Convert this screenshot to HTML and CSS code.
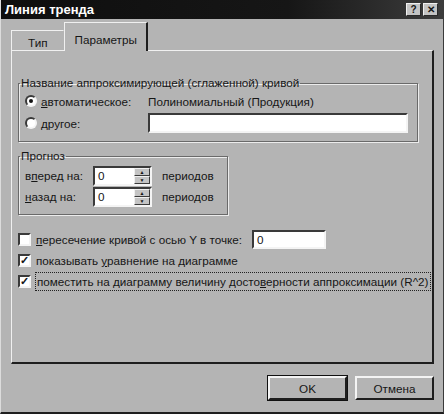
FILE: index.html
```html
<!DOCTYPE html>
<html lang="ru">
<head>
	<meta charset="UTF-8">
	<title>Линия тренда</title>
	<link rel="stylesheet" href="styles.css">
</head>
<body>

	<div class="dialog">
		<!-- title bar -->
		<div class="titlebar">
			<span class="title">Линия тренда</span>
			<div class="caption-buttons">
				<span class="cap-btn">?</span>
				<span class="cap-btn">&#x2715;</span>
			</div>
		</div>

		<!-- tabs -->
		<div class="tabs">
			<div class="tab">Тип</div>
			<div class="tab active-tab">Параметры</div>
		</div>

		<div class="panel">
			<fieldset class="group group-name">
				<legend>Название аппроксимирующей (сглаженной) кривой</legend>
				<div class="row">
					<span class="radio checked"></span>
					<span class="radio-label"><u>а</u>втоматическое:</span>
					<span>Полиномиальный (Продукция)</span>
				</div>
				<div class="row">
					<span class="radio"></span>
					<span class="radio-label"><u>д</u>ругое:</span>
					<span class="textbox name-box"></span>
				</div>
			</fieldset>

			<fieldset class="group group-forecast">
				<legend>Прогноз</legend>
				<div class="row">
					<span class="field-label">в<u>п</u>еред на:</span>
					<div class="spinner">
						<span class="spin-value">0</span>
						<div class="spin-buttons"><span class="spin-btn">&#9650;</span><span class="spin-btn">&#9660;</span></div>
					</div>
					<span class="units">периодов</span>
				</div>
				<div class="row">
					<span class="field-label"><u>н</u>азад на:</span>
					<div class="spinner">
						<span class="spin-value">0</span>
						<div class="spin-buttons"><span class="spin-btn">&#9650;</span><span class="spin-btn">&#9660;</span></div>
					</div>
					<span class="units">периодов</span>
				</div>
			</fieldset>

			<div class="checks">
				<div class="check-row">
					<span class="checkbox"></span>
					<span><u>п</u>ересечение кривой с осью Y в точке:</span>
					<span class="textbox cross-box">0</span>
				</div>
				<div class="check-row">
					<span class="checkbox checked">&#10003;</span>
					<span>показывать <u>у</u>равнение на диаграмме</span>
				</div>
				<div class="check-row">
					<span class="checkbox checked">&#10003;</span>
					<span class="focused">поместить на диаграмму величину досто<u>в</u>ерности аппроксимации (R^2)</span>
				</div>
			</div>
		</div>

		<div class="buttons">
			<div class="button default-button">OK</div>
			<div class="button">Отмена</div>
		</div>
	</div>

</body>
</html>
```

FILE: styles.css
```css
body {
	margin: 0;
	overflow: hidden;
	background: #b4b4b4;
}

.dialog {
	width: 444px;
	height: 414px;
	box-sizing: border-box;
	display: flex;
	flex-direction: column;
	background: #b4b4b4;
	border-left: 1px solid #dcdcdc;
	border-right: 1px solid #3a3a3a;
	border-bottom: 2px solid #1e1e1e;
	font-family: "Liberation Sans", Arial, sans-serif;
	font-size: 11.7px;
	color: #161616;
	white-space: nowrap;
}

.titlebar {
	height: 19px;
	flex: none;
	display: flex;
	justify-content: space-between;
	align-items: center;
	padding: 0 5px 0 4px;
	background: linear-gradient(90deg, #0e0e0e 0%, #161616 65%, #3c3c3c 100%);
}

.title {
	color: white;
	font-weight: bold;
	font-size: 13px;
}

.caption-buttons {
	display: flex;
	gap: 2px;
}

.cap-btn {
	width: 15px;
	height: 13px;
	box-sizing: border-box;
	background: #c4c4c4;
	border: 1px solid;
	border-color: #f0f0f0 #2a2a2a #2a2a2a #f0f0f0;
	font-size: 10px;
	font-weight: bold;
	line-height: 11px;
	text-align: center;
}

/* tabs */
.tabs {
	height: 31px;
	flex: none;
	display: flex;
	align-items: flex-end;
	padding-left: 10px;
	box-sizing: border-box;
}

.tab {
	height: 21px;
	box-sizing: border-box;
	padding: 5px 16px 0 16px;
	border: 1px solid;
	border-color: #f0f0f0 transparent transparent #f0f0f0;
	border-bottom: none;
	margin-bottom: -1px;
}

.active-tab {
	height: 29px;
	padding: 10px 9px 0 9px;
	border-color: #f0f0f0 #1e1e1e transparent #f0f0f0;
	border-right-width: 2px;
	background: #b4b4b4;
	position: relative;
	z-index: 1;
}

.panel {
	height: 314px;
	flex: none;
	margin: 0 9px 0 10px;
	box-sizing: border-box;
	border: 1px solid;
	border-color: #f0f0f0 #1e1e1e #1e1e1e #f0f0f0;
	border-right-width: 2px;
	border-bottom-width: 2px;
}

/* group boxes */
.group {
	margin: 0 0 0 6px;
	padding: 0;
	box-sizing: border-box;
	border: 1px solid #6a6a6a;
	box-shadow: inset 1px 1px 0 #ececec, 1px 1px 0 #ececec;
}

.group legend {
	padding: 0 1px;
	margin-left: 1px;
	line-height: 14px;
}

.group-name {
	width: 400px;
	height: 66px;
	margin-top: 25px;
}

.group-forecast {
	width: 210px;
	height: 66px;
	margin-top: 7px;
}

.row {
	height: 22px;
	display: flex;
	align-items: center;
	padding-left: 6px;
}

.group-forecast .row {
	height: 21px;
}

.group-forecast .row:first-of-type {
	margin-top: 2px;
}

.radio {
	width: 12px;
	height: 12px;
	box-sizing: border-box;
	border-radius: 50%;
	background: white;
	border: 2px solid;
	border-color: #3a3a3a #f4f4f4 #f4f4f4 #3a3a3a;
	margin-right: 4px;
	display: flex;
	align-items: center;
	justify-content: center;
}

.radio.checked::after {
	content: "";
	width: 4px;
	height: 4px;
	border-radius: 50%;
	background: #111;
}

.radio-label {
	width: 107px;
}

.textbox {
	height: 20px;
	box-sizing: border-box;
	background: white;
	border: 2px solid;
	border-color: #3a3a3a #f4f4f4 #f4f4f4 #3a3a3a;
	padding-left: 3px;
	line-height: 16px;
}

.name-box {
	width: 260px;
}

.field-label {
	width: 68px;
}

.spinner {
	width: 59px;
	height: 20px;
	box-sizing: border-box;
	display: flex;
	background: white;
	border: 2px solid;
	border-color: #3a3a3a #f4f4f4 #f4f4f4 #3a3a3a;
	margin-right: 10px;
}

.spin-value {
	flex: 1;
	padding-left: 3px;
	line-height: 16px;
}

.spin-buttons {
	width: 16px;
	display: flex;
	flex-direction: column;
}

.spin-btn {
	flex: 1;
	box-sizing: border-box;
	background: #c4c4c4;
	border: 1px solid;
	border-color: #f0f0f0 #3a3a3a #3a3a3a #f0f0f0;
	font-size: 5px;
	line-height: 6px;
	text-align: center;
}

/* checkboxes */
.checks {
	margin-top: 14px;
	padding-left: 6px;
}

.check-row {
	height: 21px;
	display: flex;
	align-items: center;
}

.checkbox {
	width: 13px;
	height: 13px;
	box-sizing: border-box;
	background: white;
	border: 2px solid;
	border-color: #3a3a3a #f4f4f4 #f4f4f4 #3a3a3a;
	margin-right: 5px;
	font-size: 11px;
	font-weight: bold;
	line-height: 9px;
	text-align: center;
}

.cross-box {
	width: 74px;
	height: 19px;
	margin-left: 10px;
	line-height: 15px;
}

.focused {
	outline: 1px dotted #222;
	padding: 2px 1px;
}

/* bottom buttons */
.buttons {
	display: flex;
	justify-content: flex-end;
	gap: 8px;
	margin: 12px 9px 0 0;
}

.button {
	width: 79px;
	height: 24px;
	box-sizing: border-box;
	display: flex;
	align-items: center;
	justify-content: center;
	border: 2px solid;
	border-color: #f4f4f4 #1e1e1e #1e1e1e #f4f4f4;
}

.default-button {
	outline: 1px solid #111;
}
```
